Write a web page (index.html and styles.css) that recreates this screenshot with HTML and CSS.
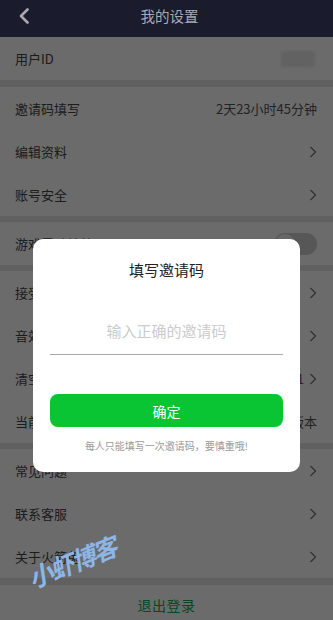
FILE: index.html
```html
<!DOCTYPE html>
<html lang="zh">
<head>
<meta charset="utf-8">
<title>我的设置</title>
<link rel="stylesheet" href="styles.css">
</head>
<body>
<div class="page">
  <header class="topbar">
    <svg class="back" width="12" height="16" viewBox="0 0 12 16"><path d="M9.5 1.5 L3 8 L9.5 14.5" fill="none" stroke="currentColor" stroke-width="2.6" stroke-linecap="round" stroke-linejoin="round"/></svg>
    <h1 class="title">我的设置</h1>
  </header>
  <main class="content">
    <section class="group">
      <div class="row"><span class="label">用户ID</span><span class="blurid"></span></div>
    </section>
    <section class="group">
      <div class="row"><span class="label">邀请码填写</span><span class="value">2天23小时45分钟</span></div>
      <div class="row"><span class="label">编辑资料</span><svg class="chev" width="8" height="12" viewBox="0 0 8 12"><path d="M1.5 1 L6.5 6 L1.5 11" fill="none" stroke="currentColor" stroke-width="1.3"/></svg></div>
      <div class="row"><span class="label">账号安全</span><svg class="chev" width="8" height="12" viewBox="0 0 8 12"><path d="M1.5 1 L6.5 6 L1.5 11" fill="none" stroke="currentColor" stroke-width="1.3"/></svg></div>
    </section>
    <section class="group">
      <div class="row"><span class="label">游戏震动特效</span><span class="switch"><span class="knob"></span></span></div>
    </section>
    <section class="group gap6">
      <div class="row"><span class="label">接受消息通知</span><svg class="chev" width="8" height="12" viewBox="0 0 8 12"><path d="M1.5 1 L6.5 6 L1.5 11" fill="none" stroke="currentColor" stroke-width="1.3"/></svg></div>
      <div class="row"><span class="label">音效设置</span><svg class="chev" width="8" height="12" viewBox="0 0 8 12"><path d="M1.5 1 L6.5 6 L1.5 11" fill="none" stroke="currentColor" stroke-width="1.3"/></svg></div>
      <div class="row"><span class="label">清空缓存</span><span class="value">0.01<svg class="chev inline" width="8" height="12" viewBox="0 0 8 12"><path d="M1.5 1 L6.5 6 L1.5 11" fill="none" stroke="currentColor" stroke-width="1.3"/></svg></span></div>
      <div class="row"><span class="label">当前版本</span><span class="value">已是最新版本</span></div>
    </section>
    <section class="group gap6">
      <div class="row"><span class="label">常见问题</span><svg class="chev" width="8" height="12" viewBox="0 0 8 12"><path d="M1.5 1 L6.5 6 L1.5 11" fill="none" stroke="currentColor" stroke-width="1.3"/></svg></div>
      <div class="row"><span class="label">联系客服</span><svg class="chev" width="8" height="12" viewBox="0 0 8 12"><path d="M1.5 1 L6.5 6 L1.5 11" fill="none" stroke="currentColor" stroke-width="1.3"/></svg></div>
      <div class="row"><span class="label">关于火箭兔</span><svg class="chev" width="8" height="12" viewBox="0 0 8 12"><path d="M1.5 1 L6.5 6 L1.5 11" fill="none" stroke="currentColor" stroke-width="1.3"/></svg></div>
    </section>
    <section class="group">
      <div class="logout">退出登录</div>
    </section>
  </main>
  <div class="mask"></div>
  <div class="dialog">
    <h2 class="dlg-title">填写邀请码</h2>
    <div class="field">输入正确的邀请码</div>
    <button class="ok">确定</button>
    <p class="note">每人只能填写一次邀请码，要慎重哦!</p>
  </div>
  <div class="watermark">小虾博客</div>
</div>
</body>
</html>
```
FILE: styles.css
```css
* { box-sizing: border-box; }
html, body { margin: 0; padding: 0; }
body {
  width: 333px;
  height: 620px;
  overflow: hidden;
  font-family: "Noto Sans CJK SC", "Noto Sans", sans-serif;
  background: #e4e4e4;
}
.page { position: relative; width: 333px; height: 620px; overflow: hidden; }
.topbar {
  height: 37px;
  background: #1a1b2c;
  display: flex;
  align-items: center;
  justify-content: center;
  padding-bottom: 5px;
  position: relative;
  z-index: 3;
}
.back { position: absolute; left: 18px; top: 8px; color: #a9a9ae; }
.title { margin: 0; font-size: 14.5px; font-weight: normal; color: #a9a9ae; line-height: 20px; padding-left: 6px; }
.content { display: flex; flex-direction: column; }
.group { background: #fff; margin-bottom: 6px; }
.group:first-child { margin-bottom: 7px; }
.group:nth-child(5) { margin-bottom: 7px; }
.row {
  height: 43px;
  display: flex;
  align-items: center;
  justify-content: space-between;
  padding: 0 16px 0 15px;
}
.label { font-size: 13px; color: #444; }
.value { font-size: 13px; color: #555; display: flex; align-items: center; gap: 5px; }
.chev { color: #777; display: block; }
.blurid { width: 34px; height: 16px; background: #e9e9e9; border-radius: 2px; filter: blur(1.5px); margin-right: 2px; }
.switch {
  width: 43px; height: 22px; border-radius: 11px; background: #cfcfcf;
  display: flex; align-items: center; padding: 1px;
}
.knob { width: 20px; height: 20px; border-radius: 50%; background: #f4f4f4; }
.logout { height: 43px; display: flex; align-items: center; justify-content: center; font-size: 14px; color: #12a84c; letter-spacing: 0.5px; padding-bottom: 3px; }
.mask { position: absolute; left: 0; top: 37px; right: 0; bottom: 0; background: rgba(0,0,0,0.58); z-index: 2; }
.dialog {
  position: absolute; z-index: 4;
  left: 33px; top: 239px; width: 267px; height: 233px;
  background: #fff; border-radius: 10px;
  display: flex; flex-direction: column; align-items: center;
  padding: 20px 17px 0;
}
.dlg-title { margin: 0; font-size: 15px; font-weight: normal; color: #222; line-height: 22px; }
.field {
  width: 233px; margin-top: 36px; height: 38px;
  border-bottom: 1px solid #a8a8a8;
  font-size: 15px; color: #ccc; text-align: center; line-height: 28px;
}
.ok {
  margin-top: 39px; width: 233px; height: 33px; border: none; border-radius: 8px;
  background: #09c433; color: #fff; font-size: 14px; font-family: inherit; padding: 0;
}
.note { margin: 12px 0 0; font-size: 10px; color: #9a9a9a; line-height: 14px; }
.watermark {
  position: absolute; z-index: 5; left: 22px; top: 562px;
  font-size: 25px; font-weight: bold; font-style: italic; color: #8db6e6;
  transform: rotate(-22deg); transform-origin: left top; letter-spacing: -2px;
}
```
